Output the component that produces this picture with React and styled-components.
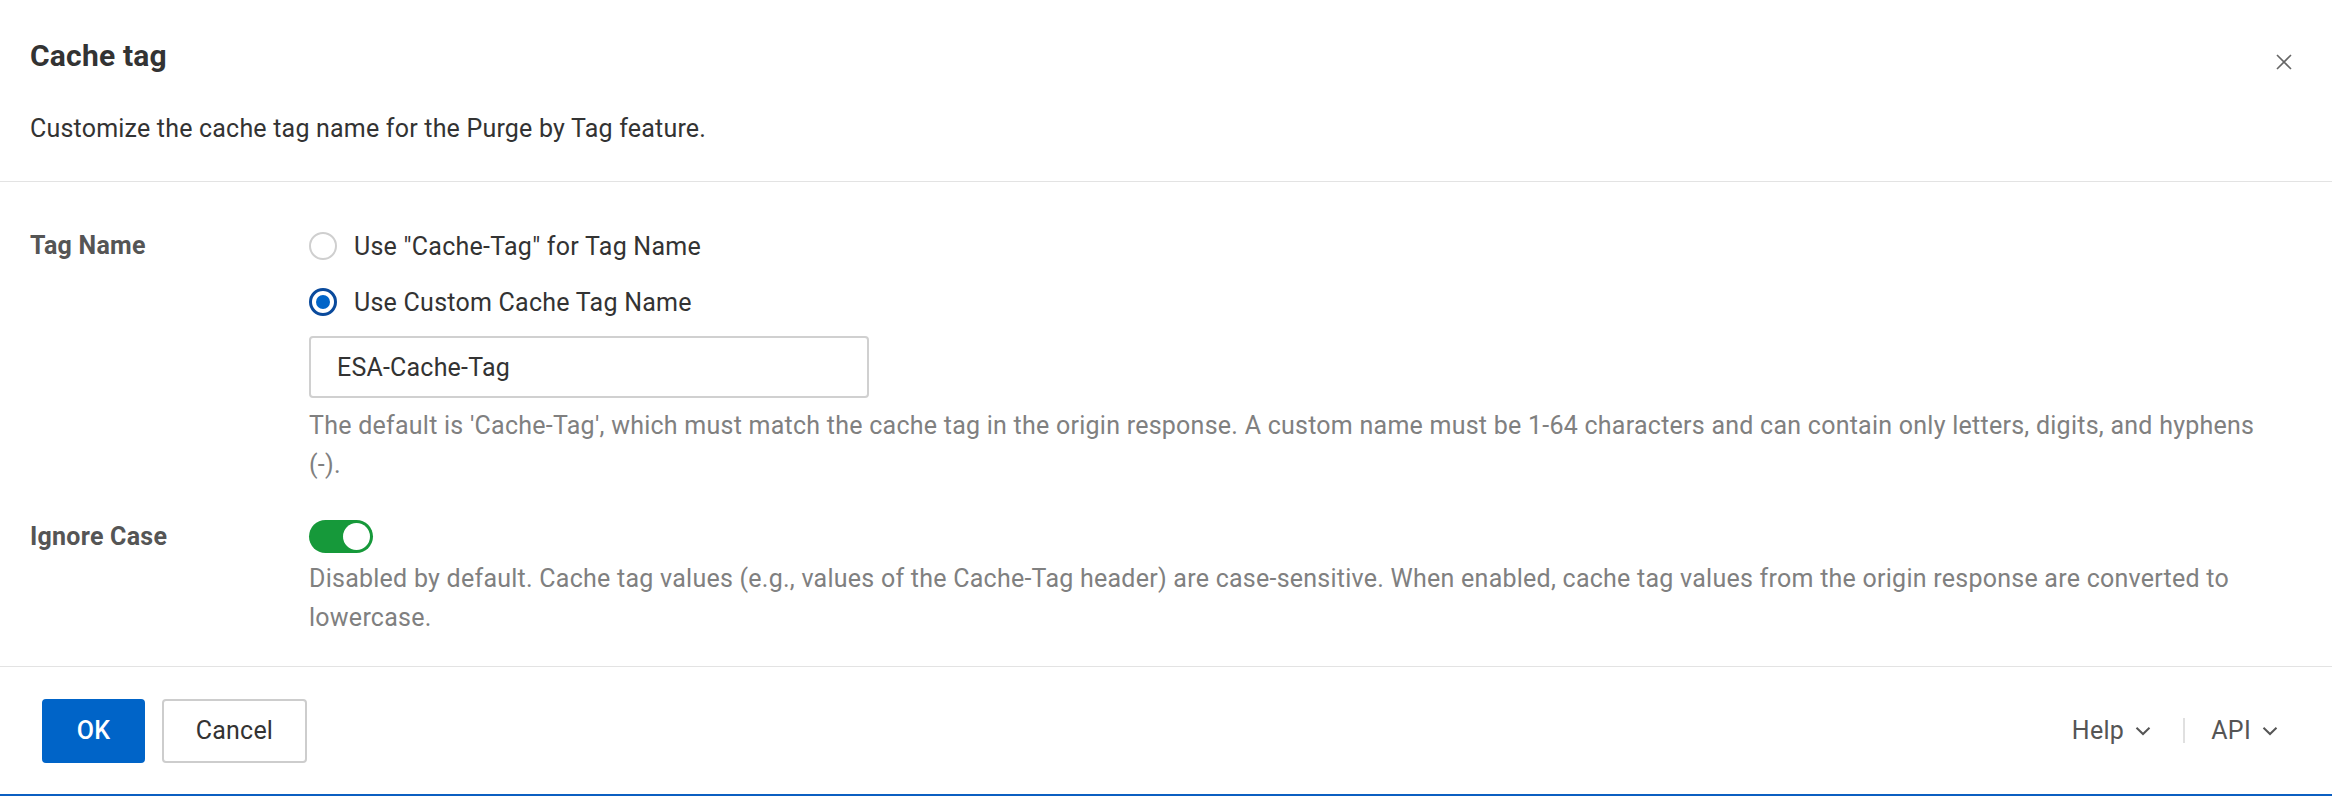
import React from 'react'
import styled, { createGlobalStyle } from 'styled-components'

const GlobalStyle = createGlobalStyle`
  html, body {
    margin: 0;
    padding: 0;
    background: #fff;
  }
  body {
    font-family: Roboto, "Liberation Sans", Arial, sans-serif;
    color: #333;
  }
  * {
    box-sizing: border-box;
  }
`

const Dialog = styled.div`
  width: 2332px;
  height: 796px;
  display: flex;
  flex-direction: column;
  background: #fff;
  border-bottom: 2px solid #0b5fc2;
`

const Header = styled.div`
  padding: 36px 30px 34px;
  border-bottom: 1px solid #e3e3e3;
`

const TitleRow = styled.div`
  display: flex;
  justify-content: space-between;
  align-items: flex-start;
`

const Title = styled.h2`
  margin: 0;
  font-size: 30px;
  line-height: 40px;
  letter-spacing: 0.2px;
  font-weight: 700;
  color: #333;
`

const Close = styled.button`
  margin: 18px 10px 0 0;
  padding: 0;
  width: 16px;
  height: 16px;
  border: 0;
  background: none;
  display: flex;
  cursor: pointer;
`

const Desc = styled.p`
  margin: 35px 0 0;
  font-size: 25px;
  letter-spacing: 0.2px;
  line-height: 36px;
  color: #333;
`

const Body = styled.div`
  padding: 44px 60px 29px 30px;
  display: flex;
  flex-direction: column;
  gap: 36px;
  border-bottom: 1px solid #e3e3e3;
  font-size: 25px;
  letter-spacing: 0.25px;
`

const FormRow = styled.div`
  display: grid;
  grid-template-columns: 279px 1fr;
`

const Label = styled.div`
  font-weight: 700;
  color: #555;
  line-height: ${p => p.$lh}px;
`

const Control = styled.div`
  display: flex;
  flex-direction: column;
  align-items: flex-start;
`

const Radio = styled.label`
  display: flex;
  align-items: center;
  gap: 17px;
  height: 40px;
  margin-bottom: ${p => p.$mb}px;
  color: #333;
`

const RadioDot = styled.span`
  width: 28px;
  height: 28px;
  border-radius: 50%;
  flex: none;
  border: ${p => (p.$on ? '3px solid #0a4a9c' : '2px solid #cfcfcf')};
  background: #fff;
  display: flex;
  align-items: center;
  justify-content: center;

  &::after {
    content: '';
    display: ${p => (p.$on ? 'block' : 'none')};
    width: 14px;
    height: 14px;
    border-radius: 50%;
    background: #0064c8;
  }
`

const TextInput = styled.input`
  width: 560px;
  height: 62px;
  padding: 0 26px;
  border: 2px solid #d0d0d0;
  border-radius: 4px;
  font-family: inherit;
  font-size: 25px;
  letter-spacing: 0.2px;
  color: #333;
  outline: none;
`

const Help = styled.p`
  margin: ${p => p.$mt}px 0 0;
  line-height: 39px;
  color: #808080;
`

const Switch = styled.span`
  width: 64px;
  height: 33px;
  border-radius: 17px;
  background: #16993a;
  display: flex;
  align-items: center;
  justify-content: flex-end;
  padding-right: 3px;

  &::after {
    content: '';
    width: 27px;
    height: 27px;
    border-radius: 50%;
    background: #fff;
  }
`

const Footer = styled.div`
  flex: 1;
  display: flex;
  align-items: center;
  justify-content: space-between;
  padding: 0 54px 0 42px;
`

const Buttons = styled.div`
  display: flex;
  gap: 17px;
`

const Button = styled.button`
  height: 64px;
  padding: 0;
  width: ${p => (p.$primary ? 103 : 145)}px;
  border-radius: 4px;
  font-family: inherit;
  font-size: 25px;
  letter-spacing: 0.2px;
  font-weight: ${p => (p.$primary ? 500 : 400)};
  color: ${p => (p.$primary ? '#fff' : '#333')};
  background: ${p => (p.$primary ? '#0064c8' : '#fff')};
  border: 2px solid ${p => (p.$primary ? '#0064c8' : '#cdcdcd')};
`

const Links = styled.div`
  display: flex;
  align-items: center;
  font-size: 25px;
  letter-spacing: 0.3px;
  color: #555;
`

const LinkItem = styled.span`
  display: flex;
  align-items: center;
  gap: 11px;
`

const Sep = styled.span`
  width: 2px;
  height: 25px;
  background: #e0e0e0;
  margin: 0 26px 0 32px;
`

const Chevron = () => (
  <svg width="16" height="10" viewBox="0 0 16 10" fill="none">
    <path d="M1.5 1.8 L8 8 L14.5 1.8" stroke="#555" strokeWidth="2" />
  </svg>
)

const App = () => (
  <>
    <GlobalStyle />
    <Dialog>
      <Header>
        <TitleRow>
          <Title>Cache tag</Title>
          <Close aria-label="close">
            <svg width="16" height="16" viewBox="0 0 16 16">
              <path d="M1 1 L15 15 M15 1 L1 15" stroke="#666" strokeWidth="1.6" />
            </svg>
          </Close>
        </TitleRow>
        <Desc>Customize the cache tag name for the Purge by Tag feature.</Desc>
      </Header>

      <Body>
        <FormRow>
          <Label $lh={40}>Tag Name</Label>
          <Control>
            <Radio $mb={16}>
              <RadioDot />
              Use "Cache-Tag" for Tag Name
            </Radio>
            <Radio $mb={14}>
              <RadioDot $on />
              Use Custom Cache Tag Name
            </Radio>
            <TextInput defaultValue="ESA-Cache-Tag" />
            <Help $mt={8}>
              The default is 'Cache-Tag', which must match the cache tag in the origin response. A custom name must be 1-64 characters and can contain only letters, digits, and hyphens (-).
            </Help>
          </Control>
        </FormRow>

        <FormRow>
          <Label $lh={33}>Ignore Case</Label>
          <Control>
            <Switch />
            <Help $mt={6}>
              Disabled by default. Cache tag values (e.g., values of the Cache-Tag header) are case-sensitive. When enabled, cache tag values from the origin response are converted to lowercase.
            </Help>
          </Control>
        </FormRow>
      </Body>

      <Footer>
        <Buttons>
          <Button $primary>OK</Button>
          <Button>Cancel</Button>
        </Buttons>
        <Links>
          <LinkItem>Help <Chevron /></LinkItem>
          <Sep />
          <LinkItem>API <Chevron /></LinkItem>
        </Links>
      </Footer>
    </Dialog>
  </>
)

export default App
